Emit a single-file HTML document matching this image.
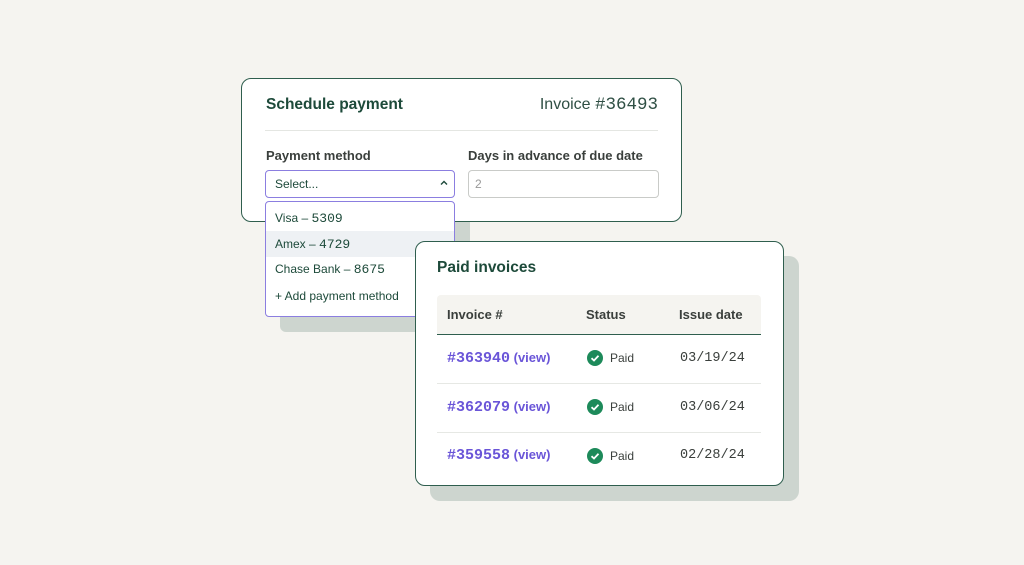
<!DOCTYPE html><html><head><style>
*{margin:0;padding:0;box-sizing:border-box}
body{width:1024px;height:565px;background:#f5f4f0;font-family:"Liberation Sans",sans-serif;position:relative;overflow:hidden;color:#1d4a3a}
.a{position:absolute}
.mono{font-family:"Liberation Mono",monospace}
</style></head><body>
<div class="a" style="left:280px;top:214px;width:190px;height:118px;background:#cdd5cf;border-radius:6px"></div>
<div class="a" style="left:241px;top:78px;width:441px;height:144px;background:#fff;border:1.5px solid #2f5e4e;border-radius:10px"></div>
<div class="a" style="left:266px;top:96px;font-size:15.5px;font-weight:bold">Schedule payment</div>
<div class="a" style="right:366px;top:95px;font-size:16px;color:#2f4f44;white-space:nowrap">Invoice <span class="mono" style="font-size:17.5px">#36493</span></div>
<div class="a" style="left:265px;top:130px;width:393px;height:1px;background:#e4e6e2"></div>
<div class="a" style="left:266px;top:148px;font-size:13px;font-weight:bold;color:#3a3f3c">Payment method</div>
<div class="a" style="left:468px;top:148px;font-size:13px;font-weight:bold;color:#3a3f3c">Days in advance of due date</div>
<div class="a" style="left:265px;top:170px;width:190px;height:28px;border:1.5px solid #8b7ee0;border-radius:4px;background:#fff"></div>
<div class="a" style="left:275px;top:177px;font-size:12px;color:#1d4a3a">Select...</div>
<svg class="a" style="left:440px;top:180px" width="8" height="6" viewBox="0 0 8 6"><path d="M1 4.5L4 1.5L7 4.5" stroke="#1d4a3a" stroke-width="1.4" fill="none"/></svg>
<div class="a" style="left:468px;top:170px;width:191px;height:28px;border:1px solid #c9cbc8;border-radius:4px;background:#fff"></div>
<div class="a" style="left:475px;top:177px;font-size:12px;color:#999">2</div>
<div class="a" style="left:265px;top:201px;width:190px;height:116px;border:1.5px solid #8b7ee0;border-radius:4px;background:#fff;overflow:hidden">
<div style="position:absolute;left:0;top:29px;width:100%;height:26px;background:#eef1f4"></div></div>
<div class="a" style="left:275px;top:211px;font-size:12px">Visa – <span class="mono" style="font-size:13px">5309</span></div>
<div class="a" style="left:275px;top:237px;font-size:12px">Amex – <span class="mono" style="font-size:13px">4729</span></div>
<div class="a" style="left:275px;top:262px;font-size:12px">Chase Bank – <span class="mono" style="font-size:13px">8675</span></div>
<div class="a" style="left:275px;top:289px;font-size:12px">+ Add payment method</div>
<div class="a" style="left:430px;top:256px;width:369px;height:245px;background:#cdd5cf;border-radius:10px"></div>
<div class="a" style="left:415px;top:241px;width:369px;height:245px;background:#fff;border:1.5px solid #2f5e4e;border-radius:10px"></div>
<div class="a" style="left:437px;top:259px;font-size:15.5px;font-weight:bold">Paid invoices</div>
<div class="a" style="left:437px;top:295px;width:324px;height:40px;background:#f5f4f0;border-bottom:1.5px solid #2f5e4e;border-radius:4px 4px 0 0"></div>
<div class="a" style="left:447px;top:307px;font-size:13px;font-weight:bold;color:#3a3f3c">Invoice #</div>
<div class="a" style="left:586px;top:307px;font-size:13px;font-weight:bold;color:#3a3f3c">Status</div>
<div class="a" style="left:679px;top:307px;font-size:13px;font-weight:bold;color:#3a3f3c">Issue date</div>
<div class="a" style="left:437px;top:383px;width:324px;height:1px;background:#e6e8e4"></div>
<div class="a" style="left:437px;top:432px;width:324px;height:1px;background:#e6e8e4"></div>
<div class="a" style="left:447px;top:350px;font-size:13px;font-weight:bold;color:#6a55d8"><span class="mono" style="font-size:15px">#363940</span> (view)</div>
<div class="a" style="left:447px;top:399px;font-size:13px;font-weight:bold;color:#6a55d8"><span class="mono" style="font-size:15px">#362079</span> (view)</div>
<div class="a" style="left:447px;top:447px;font-size:13px;font-weight:bold;color:#6a55d8"><span class="mono" style="font-size:15px">#359558</span> (view)</div>
<svg class="a" style="left:587px;top:350px" width="16" height="16"><circle cx="8" cy="8" r="8" fill="#1d8a5a"/><path d="M4.5 8.2L7 10.5L11.5 5.8" stroke="#fff" stroke-width="1.8" fill="none"/></svg>
<svg class="a" style="left:587px;top:399px" width="16" height="16"><circle cx="8" cy="8" r="8" fill="#1d8a5a"/><path d="M4.5 8.2L7 10.5L11.5 5.8" stroke="#fff" stroke-width="1.8" fill="none"/></svg>
<svg class="a" style="left:587px;top:448px" width="16" height="16"><circle cx="8" cy="8" r="8" fill="#1d8a5a"/><path d="M4.5 8.2L7 10.5L11.5 5.8" stroke="#fff" stroke-width="1.8" fill="none"/></svg>
<div class="a" style="left:610px;top:351px;font-size:12px;color:#3a3f3c">Paid</div>
<div class="a" style="left:610px;top:400px;font-size:12px;color:#3a3f3c">Paid</div>
<div class="a" style="left:610px;top:449px;font-size:12px;color:#3a3f3c">Paid</div>
<div class="a mono" style="left:680px;top:351px;font-size:13.5px;color:#3a3f3c">03/19/24</div>
<div class="a mono" style="left:680px;top:400px;font-size:13.5px;color:#3a3f3c">03/06/24</div>
<div class="a mono" style="left:680px;top:448px;font-size:13.5px;color:#3a3f3c">02/28/24</div>
</body></html>
